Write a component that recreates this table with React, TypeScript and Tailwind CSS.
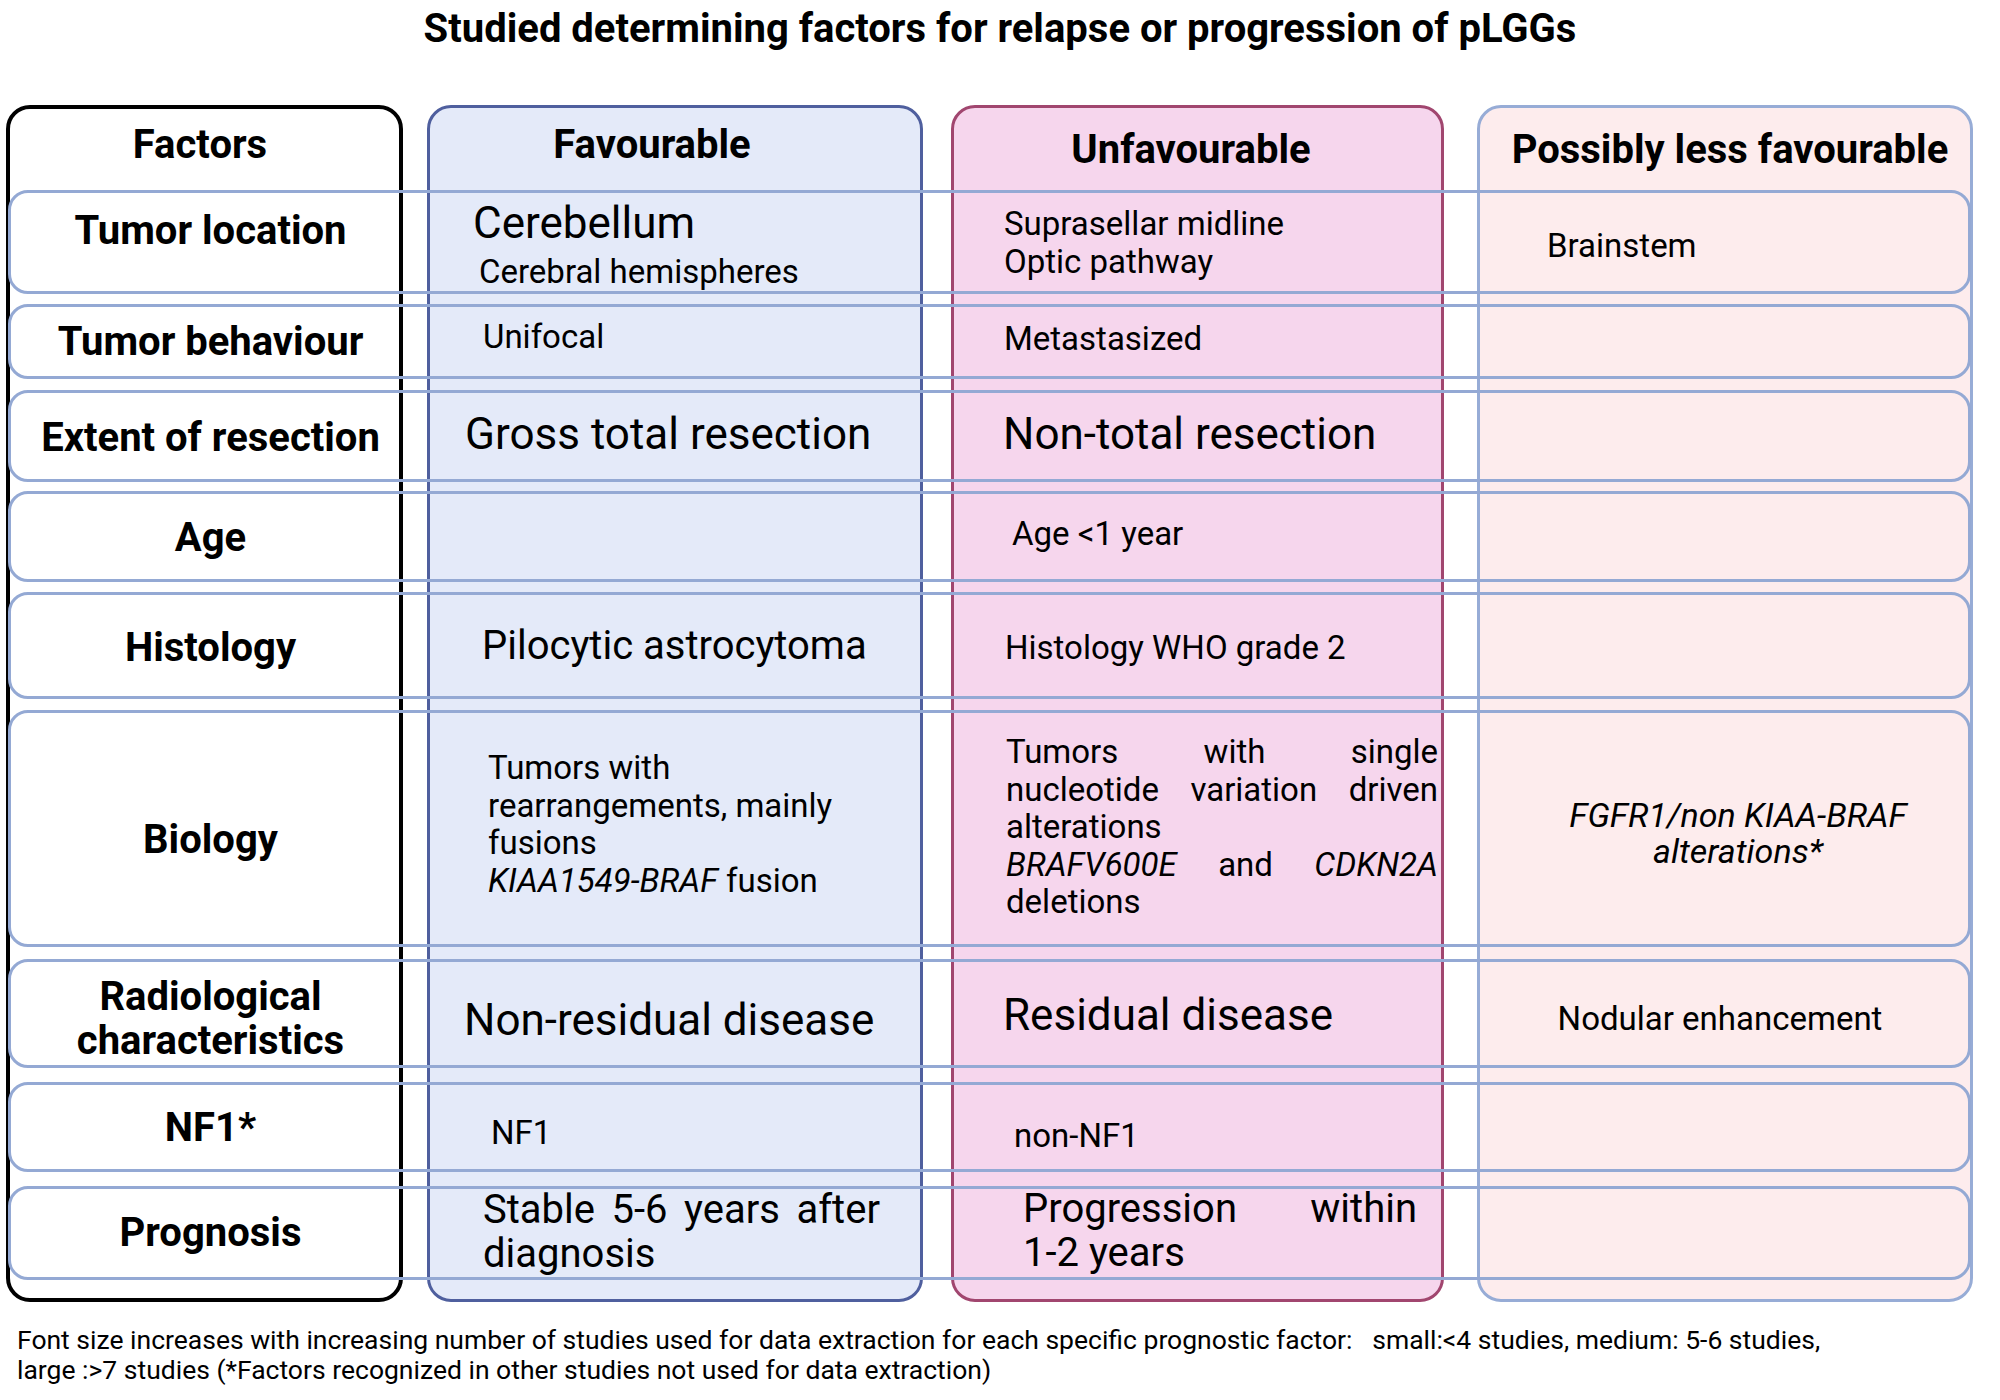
import React from "react";

function JLine({ words }: { words: React.ReactNode[] }) {
  return (
    <div className="flex justify-between">
      {words.map((w, i) => (
        <span key={i}>{w}</span>
      ))}
    </div>
  );
}

const ROW = "col-span-full mx-[2px] rounded-[20px] border-[3.5px] border-[#94a9d4]";
const LABEL = "col-start-1 text-center pl-[12px] font-bold text-[40px] leading-[44px]";
const SM = "text-[33px] leading-[37.5px]";
const MD = "text-[40px] leading-[44px]";
const LG = "text-[44px] leading-[52px]";

export default function App() {
  return (
    <div className="w-[2000px] h-[1400px] bg-white text-black [font-family:Roboto,sans-serif] overflow-hidden">
      <div className="h-[105px] pt-[7px] text-center font-bold text-[40px] leading-[44px]">
        Studied determining factors for relapse or progression of pLGGs
      </div>

      <div className="ml-[6px] grid grid-cols-[397px_24px_496px_28px_493px_33px_496px] grid-rows-[85px_104px_10px_75px_11px_92px_9px_91px_10px_107px_11px_237px_12px_109px_14px_90px_14px_94px_22px]">
        {/* columns */}
        <div className="col-start-1 row-span-full rounded-[24px] border-[4px] border-black bg-white" />
        <div className="col-start-3 row-span-full rounded-[24px] border-[3px] border-[#4f5f9e] bg-[#e4eaf9]" />
        <div className="col-start-5 row-span-full rounded-[24px] border-[3px] border-[#a1466f] bg-[#f6d6ed]" />
        <div className="col-start-7 row-span-full rounded-[24px] border-[3px] border-[#97acd6] bg-[#fdeced]" />

        {/* rows */}
        <div className={`${ROW} row-start-2`} />
        <div className={`${ROW} row-start-4`} />
        <div className={`${ROW} row-start-6`} />
        <div className={`${ROW} row-start-8`} />
        <div className={`${ROW} row-start-10`} />
        <div className={`${ROW} row-start-12`} />
        <div className={`${ROW} row-start-14`} />
        <div className={`${ROW} row-start-16`} />
        <div className={`${ROW} row-start-18`} />

        {/* headers */}
        <div className="col-start-1 row-start-1 pt-[18px] pr-[9px] text-center font-bold text-[40px] leading-[44px]">Factors</div>
        <div className="col-start-3 row-start-1 pt-[18px] pr-[46px] text-center font-bold text-[40px] leading-[44px]">Favourable</div>
        <div className="col-start-5 row-start-1 pt-[23px] pr-[13px] text-center font-bold text-[40px] leading-[44px]">Unfavourable</div>
        <div className="col-start-7 row-start-1 pt-[23px] pl-[10px] text-center font-bold text-[40px] leading-[44px] whitespace-nowrap">Possibly less favourable</div>

        {/* row labels */}
        <div className={`${LABEL} row-start-2 pt-[19px]`}>Tumor location</div>
        <div className={`${LABEL} row-start-4 pt-[16px]`}>Tumor behaviour</div>
        <div className={`${LABEL} row-start-6 pt-[26px]`}>Extent of resection</div>
        <div className={`${LABEL} row-start-8 pt-[25px]`}>Age</div>
        <div className={`${LABEL} row-start-10 pt-[34px]`}>Histology</div>
        <div className={`${LABEL} row-start-12 pt-[108px]`}>Biology</div>
        <div className={`${LABEL} row-start-14 pt-[16px]`}>
          Radiological
          <br />
          characteristics
        </div>
        <div className={`${LABEL} row-start-16 pt-[24px]`}>NF1*</div>
        <div className={`${LABEL} row-start-18 pt-[25px]`}>Prognosis</div>

        {/* Favourable column */}
        <div className="col-start-3 row-start-2 pt-[7px]">
          <div className={`${LG} pl-[46px]`}>Cerebellum</div>
          <div className={`${SM} pl-[52px] mt-[4px]`}>Cerebral hemispheres</div>
        </div>
        <div className={`col-start-3 row-start-4 pt-[14px] pl-[56px] ${SM}`}>Unifocal</div>
        <div className={`col-start-3 row-start-6 pt-[18px] pl-[38px] ${LG}`}>Gross total resection</div>
        <div className={`col-start-3 row-start-10 pt-[32px] pl-[55px] ${MD}`}>Pilocytic astrocytoma</div>
        <div className={`col-start-3 row-start-12 pt-[39px] pl-[61px] ${SM}`}>
          Tumors with
          <br />
          rearrangements, mainly
          <br />
          fusions
          <br />
          <i>KIAA1549-BRAF</i> fusion
        </div>
        <div className={`col-start-3 row-start-14 pt-[35px] pl-[37px] ${LG}`}>Non-residual disease</div>
        <div className={`col-start-3 row-start-16 pt-[32px] pl-[64px] ${SM}`}>NF1</div>
        <div className={`col-start-3 row-start-18 pt-[2px] pl-[56px] ${MD}`}>
          <div className="w-[397px]">
            <JLine words={["Stable", "5-6", "years", "after"]} />
            <div>diagnosis</div>
          </div>
        </div>

        {/* Unfavourable column */}
        <div className={`col-start-5 row-start-2 pt-[15px] pl-[53px] ${SM}`}>
          Suprasellar midline
          <br />
          Optic pathway
        </div>
        <div className={`col-start-5 row-start-4 pt-[16px] pl-[53px] ${SM}`}>Metastasized</div>
        <div className={`col-start-5 row-start-6 pt-[18px] pl-[52px] ${LG}`}>Non-total resection</div>
        <div className={`col-start-5 row-start-8 pt-[24px] pl-[61px] ${SM}`}>Age &lt;1 year</div>
        <div className={`col-start-5 row-start-10 pt-[37px] pl-[54px] ${SM}`}>Histology WHO grade 2</div>
        <div className={`col-start-5 row-start-12 pt-[23px] pl-[55px] ${SM}`}>
          <div className="w-[432px]">
            <JLine words={["Tumors", "with", "single"]} />
            <JLine words={["nucleotide", "variation", "driven"]} />
            <div>alterations</div>
            <JLine words={[<i key="a">BRAFV600E</i>, "and", <i key="b">CDKN2A</i>]} />
            <div>deletions</div>
          </div>
        </div>
        <div className={`col-start-5 row-start-14 pt-[30px] pl-[52px] ${LG}`}>Residual disease</div>
        <div className={`col-start-5 row-start-16 pt-[35px] pl-[63px] ${SM}`}>non-NF1</div>
        <div className={`col-start-5 row-start-18 pt-[1px] pl-[72px] ${MD}`}>
          <div className="w-[394px]">
            <JLine words={["Progression", "within"]} />
            <div>1-2 years</div>
          </div>
        </div>

        {/* Possibly less favourable column */}
        <div className={`col-start-7 row-start-2 pt-[37px] pl-[70px] ${SM}`}>Brainstem</div>
        <div className="col-start-7 row-start-12 pt-[87px] pl-[26px] text-center italic text-[34px] leading-[36px]">
          FGFR1/non KIAA-BRAF
          <br />
          alterations*
        </div>
        <div className={`col-start-7 row-start-14 pt-[41px] pr-[10px] text-center ${SM}`}>Nodular enhancement</div>
      </div>

      <div className="mt-[23px] pl-[17px] text-[26.5px] leading-[30px]">
        Font size increases with increasing number of studies used for data extraction for each specific prognostic factor:
        <span className="whitespace-pre">   </span>small:&lt;4 studies, medium: 5-6 studies,
        <br />
        large :&gt;7 studies (*Factors recognized in other studies not used for data extraction)
      </div>
    </div>
  );
}
